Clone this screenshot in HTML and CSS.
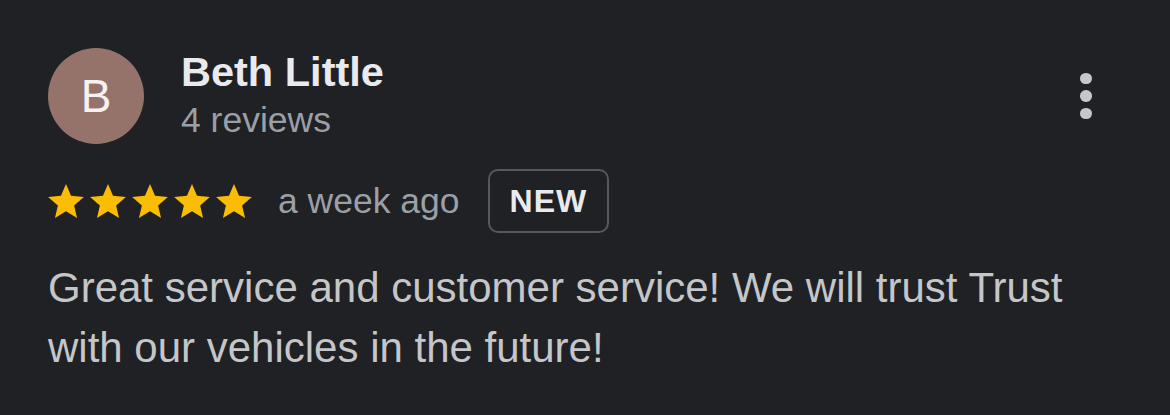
FILE: index.html
```html
<!DOCTYPE html>
<html lang="en">
<head>
  <meta charset="UTF-8" />
  <meta name="viewport" content="width=device-width, initial-scale=1.0"/>
  <title>Review</title>
  <link rel="stylesheet" href="styles.css">
</head>
<body>
  <div class="review">
    <div class="header">
      <div class="avatar">B</div>
      <div class="author">
        <div class="name">Beth Little</div>
        <div class="count">4 reviews</div>
      </div>
      <div class="more">
        <span class="dot"></span>
        <span class="dot"></span>
        <span class="dot"></span>
      </div>
    </div>

    <div class="meta">
      <div class="stars">
        <svg viewBox="2 2 20 19"><path d="M12 17.27L18.18 21l-1.64-7.03L22 9.24l-7.19-.61L12 2 9.19 8.63 2 9.24l5.46 4.73L5.82 21z"/></svg>
        <svg viewBox="2 2 20 19"><path d="M12 17.27L18.18 21l-1.64-7.03L22 9.24l-7.19-.61L12 2 9.19 8.63 2 9.24l5.46 4.73L5.82 21z"/></svg>
        <svg viewBox="2 2 20 19"><path d="M12 17.27L18.18 21l-1.64-7.03L22 9.24l-7.19-.61L12 2 9.19 8.63 2 9.24l5.46 4.73L5.82 21z"/></svg>
        <svg viewBox="2 2 20 19"><path d="M12 17.27L18.18 21l-1.64-7.03L22 9.24l-7.19-.61L12 2 9.19 8.63 2 9.24l5.46 4.73L5.82 21z"/></svg>
        <svg viewBox="2 2 20 19"><path d="M12 17.27L18.18 21l-1.64-7.03L22 9.24l-7.19-.61L12 2 9.19 8.63 2 9.24l5.46 4.73L5.82 21z"/></svg>
      </div>
      <span class="time">a week ago</span>
      <span class="badge">NEW</span>
    </div>

    <p class="text">Great service and customer service! We will trust Trust with our vehicles in the future!</p>
  </div>
</body>
</html>
```

FILE: styles.css
```css
body {
  margin: 0;
  font-family: 'Liberation Sans', Arial, sans-serif;
  background: #202124;
  height: 100vh;
  overflow: hidden;
}

.review {
  padding: 48px 48px 0 48px;
}

.header {
  display: flex;
  align-items: center;
}

.avatar {
  width: 96px;
  height: 96px;
  border-radius: 50%;
  background: #95736a;
  color: #f4f1f0;
  font-size: 46px;
  display: flex;
  justify-content: center;
  align-items: center;
  flex-shrink: 0;
}

.author {
  margin-left: 37px;
  flex: 1;
  align-self: flex-start;
}

.name {
  font-size: 41.5px;
  font-weight: bold;
  line-height: 48px;
  color: #e8eaed;
}

.count {
  margin-top: 2px;
  font-size: 35.5px;
  line-height: 44px;
  color: #9aa0a6;
}

.more {
  width: 72px;
  display: flex;
  flex-direction: column;
  align-items: center;
  gap: 6px;
}

.dot {
  width: 11.5px;
  height: 11.5px;
  border-radius: 50%;
  background: #c6c7c9;
}

.meta {
  display: flex;
  align-items: center;
  margin-top: 25px;
  height: 64px;
}

.stars {
  display: flex;
  gap: 6px;
}

.stars svg {
  width: 36px;
  height: 34px;
  fill: #fbbc04;
}

.time {
  margin-left: 26px;
  font-size: 35.5px;
  color: #9aa0a6;
}

.badge {
  margin-left: 28px;
  height: 64px;
  box-sizing: border-box;
  padding: 0 20px;
  border: 2px solid #55585c;
  border-radius: 10px;
  display: flex;
  align-items: center;
  font-size: 32px;
  font-weight: bold;
  letter-spacing: 1px;
  color: #e8eaed;
}

.text {
  margin: 25px 0 0 0;
  font-size: 42px;
  line-height: 60px;
  color: #c4c6c9;
}
```
